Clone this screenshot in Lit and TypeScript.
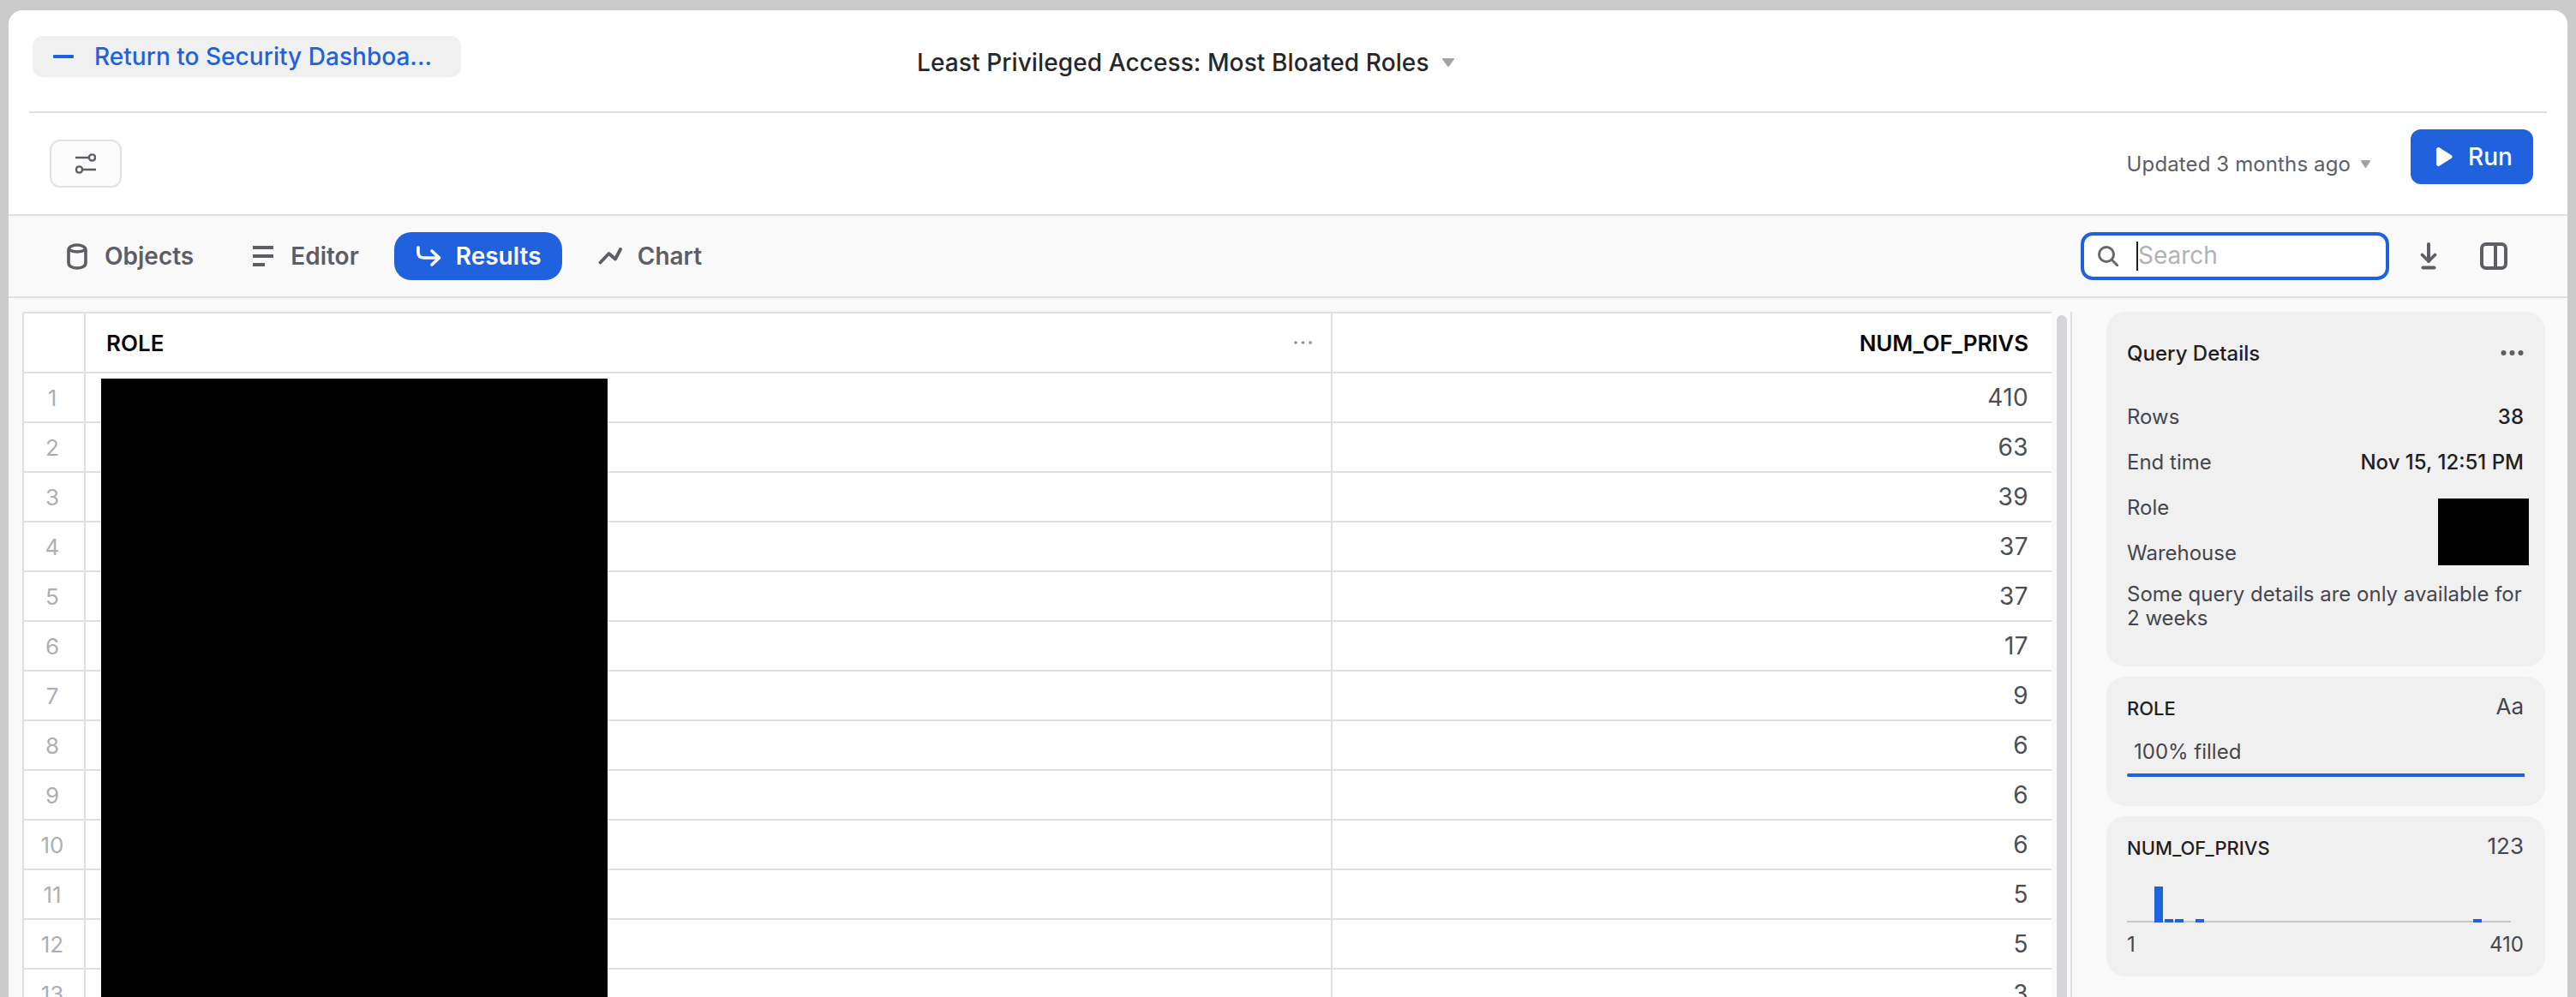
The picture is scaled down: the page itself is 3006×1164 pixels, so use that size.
import { LitElement, html, css, svg } from "lit";
import { customElement } from "lit/decorators.js";

const VALUES = [410, 63, 39, 37, 37, 17, 9, 6, 6, 6, 5, 5, 3];

@customElement("app-root")
export class AppRoot extends LitElement {
  static styles = css`
    :host {
      display: block;
      height: 100vh;
      overflow: hidden;
      background: #cbcbcb;
      font-family: Inter, "Liberation Sans", sans-serif;
      color: #1f2024;
    }
    svg { display: block; flex: none; }
    .window {
      margin: 12px 10px 0;
      height: 1152px;
      background: #fff;
      border-radius: 16px 16px 0 0;
      overflow: hidden;
      display: flex;
      flex-direction: column;
    }
    .top {
      height: 118px;
      flex: none;
      margin: 0 24px;
      border-bottom: 2px solid #e0e0e0;
      box-sizing: content-box;
      display: flex;
      align-items: flex-start;
      padding-left: 4px;
    }
    .back {
      margin-top: 30px;
      width: 500px;
      height: 48px;
      box-sizing: border-box;
      background: #f0f0f0;
      border-radius: 12px;
      display: flex;
      align-items: center;
      gap: 24px;
      padding-left: 24px;
      color: #1f62dd;
      font-size: 28px;
      font-weight: 500;
      letter-spacing: 0.03px;
      white-space: nowrap;
    }
    .title {
      margin-left: 532px;
      margin-top: 42px;
      display: flex;
      align-items: center;
      gap: 14px;
      font-size: 28px;
      line-height: 38px;
      font-weight: 500;
      letter-spacing: 0.1px;
      color: #26272b;
      white-space: nowrap;
    }
    .bar {
      flex: none;
      height: 118px;
      display: flex;
      align-items: center;
      padding: 0 40px 0 48px;
    }
    .filter {
      width: 84px;
      height: 56px;
      box-sizing: border-box;
      border: 2px solid #e2e2e2;
      border-radius: 12px;
      background: #fbfbfb;
      display: flex;
      align-items: center;
      justify-content: center;
    }
    .spacer { flex: 1; }
    .updated {
      display: flex;
      align-items: center;
      gap: 11px;
      font-size: 24px;
      letter-spacing: 0.12px;
      color: #5d5e64;
      margin-right: 46px;
    }
    .run {
      width: 143px;
      height: 64px;
      box-sizing: border-box;
      background: #2062de;
      color: #fff;
      border-radius: 12px;
      display: flex;
      align-items: center;
      gap: 18px;
      padding-left: 30px;
      font-size: 28px;
      font-weight: 500;
      margin-top: -16px;
    }
    .tools {
      flex: none;
      height: 94px;
      background: #f9f9f9;
      border-top: 2px solid #e0e0e0;
      border-bottom: 2px solid #e0e0e0;
      display: flex;
      align-items: center;
      padding: 0 70px 0 0;
    }
    .tab {
      display: flex;
      align-items: center;
      font-size: 28px;
      font-weight: 600;
      color: #5d5e64;
      height: 56px;
      box-sizing: border-box;
    }
    .tab.objects { margin-left: 68px; gap: 20px; }
    .tab.editor { margin-left: 69px; gap: 20px; }
    .tab.results {
      margin-left: 41px;
      width: 196px;
      padding-left: 26px;
      gap: 17px;
      background: #2062de;
      color: #fff;
      border-radius: 20px;
    }
    .tab.chart { margin-left: 42px; gap: 18px; }
    .search {
      width: 360px;
      height: 56px;
      box-sizing: border-box;
      border: 4px solid #2062de;
      border-radius: 14px;
      background: #fff;
      display: flex;
      align-items: center;
      padding-left: 16px;
      gap: 21px;
      font-size: 28px;
      color: #b1b2b7;
    }
    .search span {
      border-left: 2px solid #1f2024;
      height: 34px;
      line-height: 32px;
    }
    .dl { margin-left: 36px; }
    .panelicon { margin-left: 50px; }
    .body {
      flex: 1;
      min-height: 0;
      background: #f9f9f9;
      display: flex;
      padding: 16px 0 0 16px;
    }
    .grid {
      width: 2368px;
      flex: none;
      align-self: flex-start;
      background: #fff;
      border-top: 2px solid #e0e0e0;
      border-left: 2px solid #e0e0e0;
      box-sizing: border-box;
    }
    .row {
      display: grid;
      grid-template-columns: 72px 1455px 1fr;
      height: 58px;
      box-sizing: border-box;
      border-bottom: 2px solid #e0e0e0;
      align-items: center;
      font-size: 28px;
      color: #4d4e54;
    }
    .row.head {
      height: 70px;
      color: #0b0b0d;
      font-size: 26px;
      font-weight: 600;
    }
    .cell {
      height: 100%;
      display: flex;
      align-items: center;
      border-right: 2px solid #e0e0e0;
      box-sizing: border-box;
    }
    .cell.idx { justify-content: center; color: #aeafb4; font-size: 26px; padding-right: 4px; }
    .cell.role { position: relative; padding: 0 22px 0 24px; justify-content: space-between; }
    .cell.num { border-right: 0; justify-content: flex-end; padding-right: 27px; letter-spacing: 0.4px; }
    .head .cell.num { letter-spacing: -0.1px; }
    .redact {
      position: absolute;
      left: 18px;
      top: 6px;
      width: 591px;
      height: 760px;
      background: #000;
      z-index: 1;
    }
    .scroll {
      width: 12px;
      margin-left: 6px;
      margin-top: 4px;
      background: #d5d6da;
      border-radius: 6px 6px 0 0;
      flex: none;
    }
    .sidebar {
      margin-left: 4px;
      flex: 1;
      border-left: 2px solid #e0e0e0;
      padding: 0 26px 0 40px;
      display: flex;
      flex-direction: column;
      gap: 12px;
    }
    .card {
      background: #f0f0f0;
      border-radius: 22px;
      padding: 0 25px 0 24px;
      position: relative;
      flex: none;
      font-size: 24px;
      color: #45464c;
    }
    .qd { height: 414px; }
    .qd-head {
      display: flex;
      justify-content: space-between;
      align-items: center;
      height: 34px;
      padding-top: 31px;
      font-weight: 500;
      color: #1f2024;
    }
    .kv {
      display: flex;
      justify-content: space-between;
      align-items: center;
      height: 34px;
    }
    .kv b { font-weight: 500; color: #1f2024; }
    .kvs {
      margin-top: 40px;
      display: flex;
      flex-direction: column;
      gap: 19px;
    }
    .qd-redact {
      position: absolute;
      left: 387px;
      top: 218px;
      width: 106px;
      height: 78px;
      background: #000;
    }
    .note { margin-top: 18px; line-height: 28px; }
    .col-head {
      display: flex;
      justify-content: space-between;
      align-items: center;
      height: 34px;
      font-size: 22px;
      font-weight: 500;
      color: #1f2024;
    }
    .col-head i { font-style: normal; font-weight: 400; font-size: 26px; color: #45464c; margin-top: -6px; }
    .rolecard { height: 151px; padding-top: 20px; box-sizing: border-box; }
    .filled { margin: 19px 0 0 8px; height: 30px; line-height: 30px; }
    .fillbar { height: 4px; background: #2062de; margin: 10px -1px 0 0; border-radius: 2px 0 0 2px; }
    .numcard { height: 187px; padding-top: 20px; box-sizing: border-box; }
    .hist {
      margin: 28px 15px 0 0;
      height: 42px;
      position: relative;
    }
    .hist .base { position: absolute; left: 0; right: 0; bottom: 0; height: 2px; background: #c6c7cd; }
    .hist .b { position: absolute; bottom: 0; width: 10px; background: #2062de; }
    .range { display: flex; justify-content: space-between; margin-top: 11px; height: 30px; line-height: 30px; }
  `;

  private icon(content: unknown, w: number, h: number) {
    return html`<svg width=${w} height=${h} viewBox="0 0 ${w} ${h}" fill="none">${content}</svg>`;
  }

  private caret(w: number, h: number) {
    return this.icon(
      svg`<path d="M2 2H${w - 2}L${w / 2} ${h - 2}Z" fill="#a3a3a6" stroke="#a3a3a6" stroke-width="2" stroke-linejoin="round"/>`,
      w,
      h
    );
  }

  render() {
    const grey = "#5d5e64";
    const bars: [number, number][] = [[32, 42], [44, 4], [56, 4], [80, 4], [404, 4]];
    return html`
      <div class="window">
        <div class="top">
          <div class="back">
            ${this.icon(svg`<rect x="0" y="0" width="24" height="4" rx="1" fill="#1f62dd"/>`, 24, 4)}
            <span>Return to Security Dashboa...</span>
          </div>
          <div class="title"><span>Least Privileged Access: Most Bloated Roles</span>${this.caret(16, 12)}</div>
        </div>
        <div class="bar">
          <div class="filter">
            ${this.icon(svg`
              <g stroke=${grey} stroke-width="2.4">
                <path d="M0 5H15"/><circle cx="19.5" cy="5" r="3.6"/>
                <circle cx="4.5" cy="19" r="3.6"/><path d="M9 19H24"/>
              </g>`, 24, 24)}
          </div>
          <div class="spacer"></div>
          <div class="updated"><span>Updated 3 months ago</span>${this.caret(13, 11)}</div>
          <div class="run">
            ${this.icon(svg`<path d="M2.5 2.5L16 11L2.5 19.5Z" fill="#fff" stroke="#fff" stroke-width="5" stroke-linejoin="round"/>`, 19, 22)}
            <span>Run</span>
          </div>
        </div>
        <div class="tools">
          <div class="tab objects">
            ${this.icon(svg`
              <g stroke=${grey} stroke-width="3.6" stroke-linejoin="round">
                <path d="M2 8C2 4 7 2 12 2C17 2 22 4 22 8V23C22 27 17 29 12 29C7 29 2 27 2 23Z"/>
                <path d="M2 7.5Q12 12.5 22 7.5"/>
              </g>`, 24, 31)}
            <span>Objects</span>
          </div>
          <div class="tab editor">
            ${this.icon(svg`<g fill=${grey}><rect y="0" width="24" height="4"/><rect y="10" width="24" height="4" /><rect y="20" width="14" height="4"/></g>`, 24, 24)}
            <span>Editor</span>
          </div>
          <div class="tab results">
            ${this.icon(svg`
              <g stroke="#fff" stroke-width="3.6" stroke-linecap="round" stroke-linejoin="round">
                <path d="M2 2V8Q2 14 9 14H26"/><path d="M18 6L26.5 14L18 22"/>
              </g>`, 29, 24)}
            <span>Results</span>
          </div>
          <div class="tab chart">
            ${this.icon(svg`<path d="M2.5 17.5L12.5 7L20 13.5L26 2" stroke=${grey} stroke-width="3.8" stroke-linejoin="round" stroke-linecap="round"/>`, 28, 20)}
            <span>Chart</span>
          </div>
          <div class="spacer"></div>
          <div class="search">
            ${this.icon(svg`<g stroke="#66676c" stroke-width="3" stroke-linecap="round"><circle cx="10" cy="10" r="8.5"/><path d="M16.5 16.5L23 23"/></g>`, 24, 24)}
            <span>Search</span>
          </div>
          <div class="dl">
            ${this.icon(svg`
              <g stroke=${grey} stroke-width="4" stroke-linecap="round" stroke-linejoin="round">
                <path d="M10 2V22"/><path d="M2.5 14.5L10 22L17.5 14.5" stroke-width="3.6"/><path d="M3.5 29.5H16.5"/>
              </g>`, 20, 32)}
          </div>
          <div class="panelicon">
            ${this.icon(svg`<g stroke=${grey} stroke-width="4"><rect x="2" y="2" width="28" height="28" rx="5"/><path d="M18 2V30"/></g>`, 32, 32)}
          </div>
        </div>
        <div class="body">
          <div class="grid">
            <div class="row head">
              <div class="cell idx"></div>
              <div class="cell role">
                <span>ROLE</span>
                ${this.icon(svg`<g fill="#8a8b90"><circle cx="2" cy="2" r="1.8"/><circle cx="10.5" cy="2" r="1.8"/><circle cx="19" cy="2" r="1.8"/></g>`, 21, 4)}
              </div>
              <div class="cell num">NUM_OF_PRIVS</div>
            </div>
            ${VALUES.map(
              (v, i) => html`
                <div class="row">
                  <div class="cell idx">${i + 1}</div>
                  <div class="cell role">${i === 0 ? html`<div class="redact"></div>` : ""}</div>
                  <div class="cell num">${v}</div>
                </div>`
            )}
          </div>
          <div class="scroll"></div>
          <div class="sidebar">
            <div class="card qd">
              <div class="qd-head">
                <span>Query Details</span>
                ${this.icon(svg`<g fill=${grey}><circle cx="3.5" cy="3" r="3"/><circle cx="13.5" cy="3" r="3"/><circle cx="23.5" cy="3" r="3"/></g>`, 27, 6)}
              </div>
              <div class="kvs">
                <div class="kv"><span>Rows</span><b>38</b></div>
                <div class="kv"><span>End time</span><b>Nov 15, 12:51 PM</b></div>
                <div class="kv"><span>Role</span></div>
                <div class="kv"><span>Warehouse</span></div>
              </div>
              <div class="qd-redact"></div>
              <div class="note">Some query details are only available for 2 weeks</div>
            </div>
            <div class="card rolecard">
              <div class="col-head"><span>ROLE</span><i>Aa</i></div>
              <div class="filled">100% filled</div>
              <div class="fillbar"></div>
            </div>
            <div class="card numcard">
              <div class="col-head"><span>NUM_OF_PRIVS</span><i>123</i></div>
              <div class="hist">
                <div class="base"></div>
                ${bars.map(([x, h]) => html`<div class="b" style="left:${x}px;height:${h}px"></div>`)}
              </div>
              <div class="range"><span>1</span><span>410</span></div>
            </div>
          </div>
        </div>
      </div>
    `;
  }
}
